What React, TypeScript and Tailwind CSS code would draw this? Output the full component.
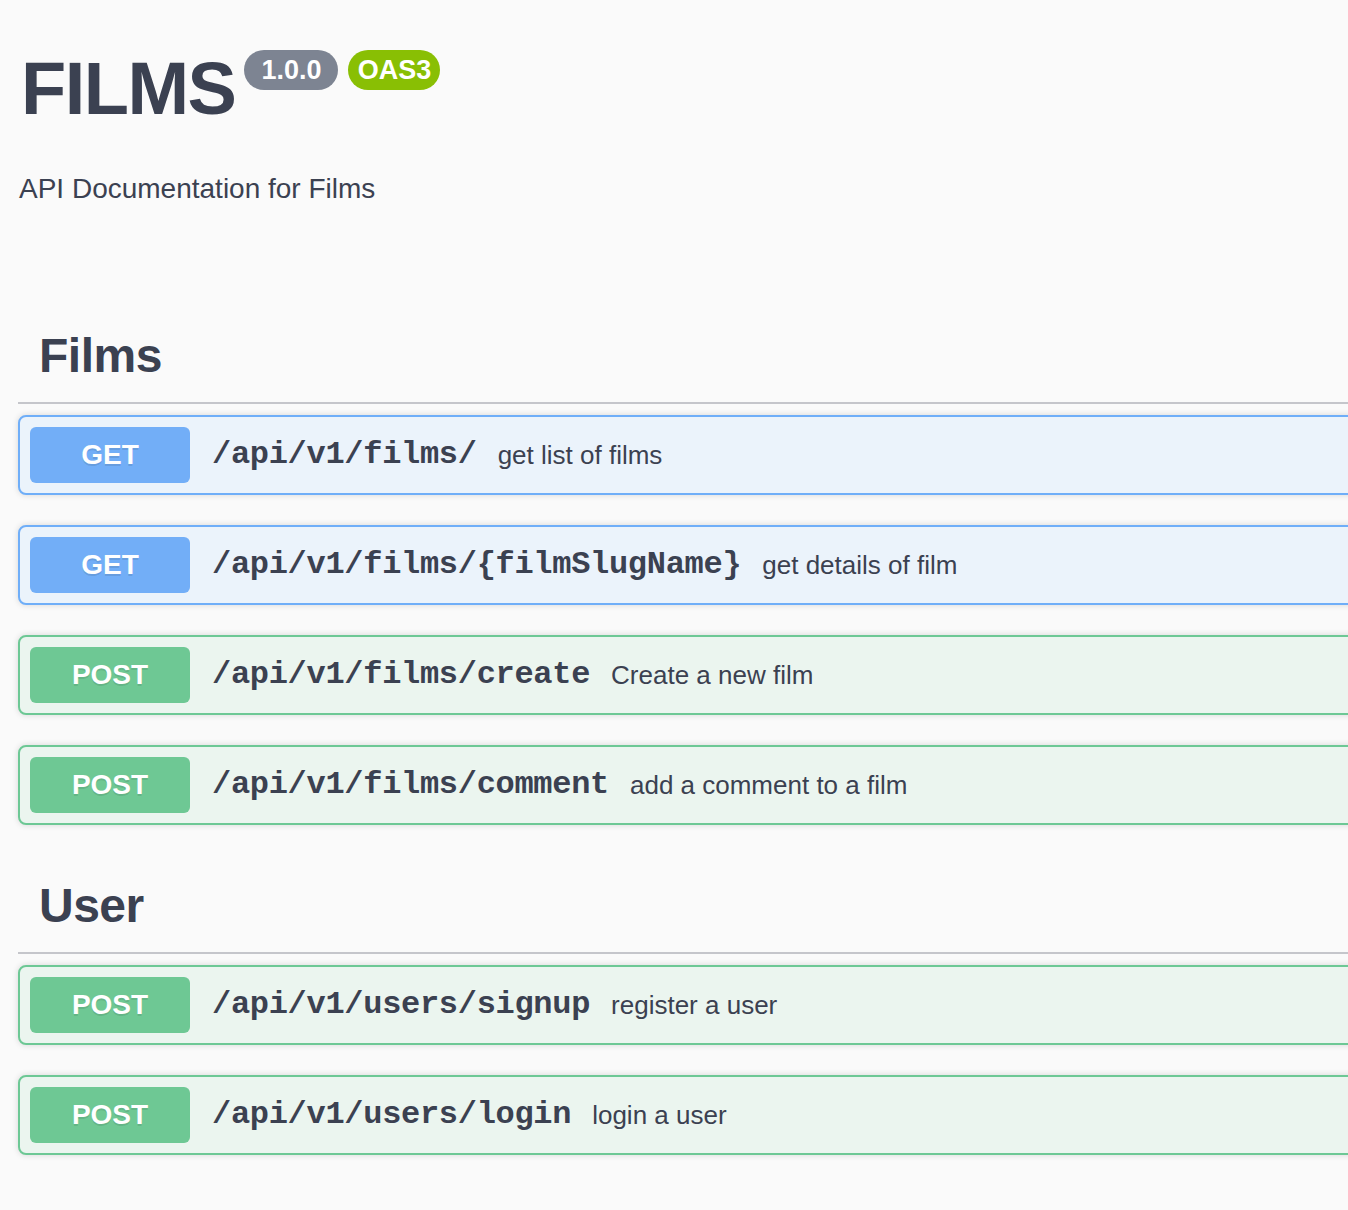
import React from 'react';

const sans = 'font-["Liberation_Sans",Arial,sans-serif]';

type Op = { method: 'GET' | 'POST'; path: string; summary: string };

const films: Op[] = [
  { method: 'GET', path: '/api/v1/films/', summary: 'get list of films' },
  { method: 'GET', path: '/api/v1/films/{filmSlugName}', summary: 'get details of film' },
  { method: 'POST', path: '/api/v1/films/create', summary: 'Create a new film' },
  { method: 'POST', path: '/api/v1/films/comment', summary: 'add a comment to a film' },
];

const users: Op[] = [
  { method: 'POST', path: '/api/v1/users/signup', summary: 'register a user' },
  { method: 'POST', path: '/api/v1/users/login', summary: 'login a user' },
];

export default function App() {
  return (
    <div className={`min-h-[1210px] w-full overflow-hidden bg-[#fafafa] text-[#3b4151] ${sans}`}>
      <div className="w-[1420px] pl-[18px] pt-[50px]">
        <div className="flex items-start">
          <h2 className="mt-[2px] ml-[3px] text-[74px] font-bold leading-[74px] tracking-[-1.5px]">FILMS</h2>
          <span className="ml-[9px] flex h-[40px] w-[94px] items-center justify-center rounded-full bg-[#7d8492] text-[27px] font-bold text-white">
            1.0.0
          </span>
          <span className="ml-[10px] flex h-[40px] w-[92px] items-center justify-center rounded-full bg-[#89bf04] text-[27px] font-bold text-white">
            OAS3
          </span>
        </div>

        <p className="mt-[49px] ml-[1px] text-[28px] leading-[28px]">API Documentation for Films</p>

        <Tag name="Films" ops={films} className="mt-[105px]" />
        <Tag name="User" ops={users} className="pt-[3px]" />
      </div>
    </div>
  );
}

function Tag({ name, ops, className }: { name: string; ops: Op[]; className: string }) {
  return (
    <section className={className}>
      <div className="border-b-2 border-[#c5c6cb] pt-[24px] pb-[22px] pl-[21px]">
        <h3 className="text-[48px] font-bold leading-[48px] tracking-[-0.5px]">{name}</h3>
      </div>
      <div className="mt-[11px]">
        {ops.map((op, i) => (
          <OpRow key={i} op={op} />
        ))}
      </div>
    </section>
  );
}

function OpRow({ op }: { op: Op }) {
  const get = op.method === 'GET';
  return (
    <div
      className={`mb-[30px] flex h-[80px] items-center rounded-[8px] border-2 p-[10px] shadow-[0_0_6px_rgba(0,0,0,0.15)] ${
        get ? 'border-[#6faef8] bg-[#ebf3fb]' : 'border-[#6dc895] bg-[#ebf5ef]'
      }`}
    >
      <span
        className={`flex h-[56px] w-[160px] shrink-0 items-center justify-center rounded-[6px] text-[28px] font-bold text-white [text-shadow:0_2px_0_rgba(0,0,0,0.1)] ${
          get ? 'bg-[#72aef7]' : 'bg-[#6ec894]'
        }`}
      >
        {op.method}
      </span>
      <span className='ml-[22px] font-["Liberation_Mono","Courier_New",monospace] text-[32px] font-bold tracking-[-0.3px]'>
        {op.path}
      </span>
      <span className="ml-[21px] text-[26px]">{op.summary}</span>
    </div>
  );
}
